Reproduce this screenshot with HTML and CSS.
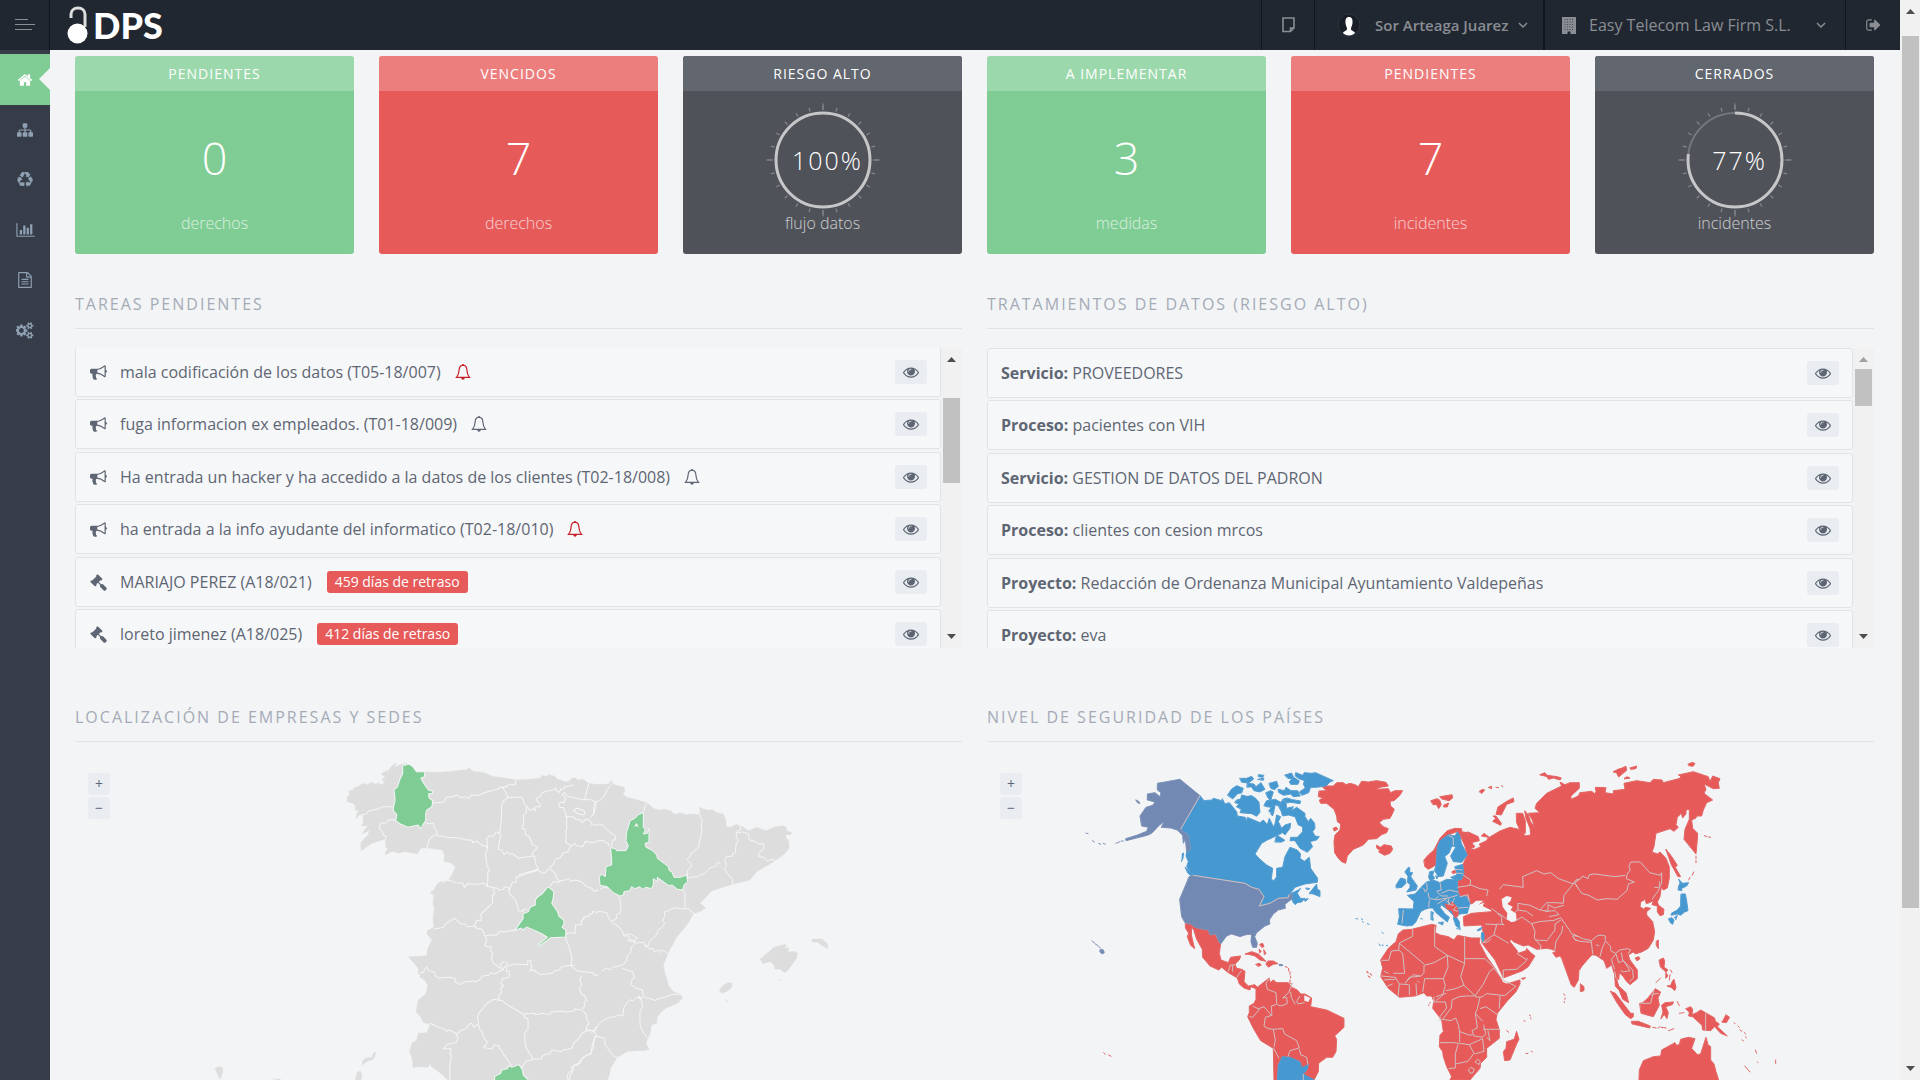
FILE: index.html
```html
<!DOCTYPE html>
<html lang="es">
<head>
<meta charset="utf-8">
<title>DPS</title>
<meta name="viewport" content="width=device-width, initial-scale=1">
<link rel="stylesheet" href="styles.css">
</head>
<body>
<svg class="sprite" aria-hidden="true">
  <symbol id="i-eye" viewBox="0 0 1792 1792"><path d="M1664 960q-152-236-381-353 61 104 61 225 0 185-131.5 316.5t-316.5 131.5-316.5-131.5-131.5-316.5q0-121 61-225-229 117-381 353 133 205 333.5 326.5t434.5 121.5 434.5-121.5 333.5-326.5zm-720-384q0-20-14-34t-34-14q-125 0-214.5 89.5t-89.5 214.5q0 20 14 34t34 14 34-14 14-34q0-86 61-147t147-61q20 0 34-14t14-34zm848 384q0 34-20 69-140 230-376.5 368.5t-499.5 138.5-499.5-139-376.5-368q-20-35-20-69t20-69q140-229 376.5-368t499.5-139 499.5 139 376.5 368q20 35 20 69z"/></symbol>
  <symbol id="i-horn" viewBox="0 0 1792 1792"><path d="M1664 640q53 0 90.5 37.5t37.5 90.5-37.5 90.5-90.5 37.5v384q0 52-38 90t-90 38q-417-347-812-380-58 19-91 66t-31 100.5 40 92.5q-20 33-23 65.5t6 58 33.5 55 48 50 61.5 50.5q-29 58-111.5 83t-168.5 11.5-132-55.5q-7-23-29.5-87.5t-32-94.5-23-89-15-101 3.5-98.5 22-110.5h-122q-66 0-113-47t-47-113v-192q0-66 47-113t113-47h480q435 0 896-384 52 0 90 38t38 90v384zm-128 604v-954q-394 302-768 343v270q377 42 768 341z"/></symbol>
  <symbol id="i-gavel" viewBox="0 0 1792 1792"><path d="M1771 1536q0 53-37 90l-107 108q-39 37-91 37-53 0-90-37l-363-364q-38-36-38-90 0-53 43-96l-256-256-126 126q-14 14-34 14t-34-14q2 2 12.5 12t12.5 13 10 11.5 10 13.5 6 13.5 5.5 16.5 1.5 18q0 38-28 68-3 3-16.5 18t-19 20.5-18.5 16.5-22 15.5-22 9-26 4.5q-40 0-68-28l-408-408q-28-28-28-68 0-13 4.5-26t9-22 15.5-22 16.5-18.5 20.5-19 18-16.5q30-28 68-28 10 0 18 1.5t16.5 5.5 13.5 6 13.5 10 11.5 10 13 12.5 12 12.5q-14-14-14-34t14-34l348-348q14-14 34-14t34 14q-2-2-12.5-12t-12.5-13-10-11.5-10-13.5-6-13.5-5.5-16.5-1.5-18q0-38 28-68 3-3 16.5-18t19-20.5 18.5-16.5 22-15.5 22-9 26-4.5q40 0 68 28l408 408q28 28 28 68 0 13-4.5 26t-9 22-15.5 22-16.5 18.5-20.5 19-18 16.5q-30 28-68 28-10 0-18-1.5t-16.5-5.5-13.5-6-13.5-10-11.5-10-13-12.5-12-12.5q14 14 14 34t-14 34l-126 126 256 256q43-43 96-43 52 0 91 37l363 363q37 39 37 91z"/></symbol>
  <symbol id="i-bell" viewBox="0 0 16 16"><path d="M8 1.2C5 1.4 4.2 3.600 4.100 6 4 9 3.400 11.200 1.500 13.300h13C12.600 11.200 12 9 11.900 6 11.800 3.600 11 1.400 8 1.200z" fill="none" stroke="currentColor" stroke-width="1.200"/><path d="M7.300 0h1.400v1.500H7.300zM6.200 13.500h3.600c-.1 1.500-.8 2.200-1.800 2.200s-1.700-.7-1.800-2.200z"/></symbol>
  <symbol id="i-chev" viewBox="0 0 10 6"><path d="M1 1l4 4 4-4" fill="none" stroke="currentColor" stroke-width="1.500"/></symbol>
  <symbol id="i-up" viewBox="0 0 9 5"><path d="M0 5L4.500 0 9 5z"/></symbol>
  <symbol id="i-down" viewBox="0 0 9 5"><path d="M0 0l4.500 5L9 0z"/></symbol>
  <symbol id="ticks" viewBox="0 0 116 116"><g fill="none" stroke="#83868b" stroke-width="4"><circle cx="58" cy="58" r="52" pathLength="24" stroke-dasharray=".09 .91" stroke-dashoffset=".045"/><circle cx="58" cy="58" r="53.500" stroke-width="6" pathLength="4" stroke-dasharray=".015 .985" stroke-dashoffset=".0075"/><circle cx="58" cy="58" r="47" stroke-width="2" stroke="#74777c"/></g></symbol>
</svg>

<div class="app">
  <header class="topbar">
    <button class="menu-toggle" aria-label="Menú">
      <svg width="20" height="12" viewBox="0 0 20 12"><path d="M0 .5h13M0 5.500h20M0 10.500h17" stroke="#8a8d93" stroke-width="1"/></svg>
    </button>
    <a class="logo" href="#">
      <svg width="22" height="38" viewBox="0 0 22 38"><path d="M4 12V8.500C4 4.500 6.800 2 11 2s7 2.500 7 6.500V21" fill="none" stroke="#dcdddd" stroke-width="3"/><circle cx="10.500" cy="27.500" r="10" fill="#fff"/></svg>
      <span>DPS</span>
    </a>
    <nav class="top-actions" aria-label="Cuenta">
      <button class="top-item top-note" aria-label="Notas"><svg width="13" height="16" viewBox="0 0 13 16"><path d="M1 1h11v10l-3.500 3.500H1zM12 11H8.500v3.500" fill="none" stroke="currentColor" stroke-width="1.600"/></svg></button>
      <button class="top-item top-user">
        <svg class="avatar" width="24" height="24" viewBox="0 0 24 24"><circle cx="12" cy="12" r="11" fill="#191d25" stroke="#303743"/><path d="M12 4c-3 0-3.800 2.500-3.500 6 .2 2.500 1.500 4 1.500 6 0 2-3.500 2-4 4 1.500 1.500 3.500 2.500 6 2.500s4.500-1 6-2.500c-.5-2-4-2-4-4 0-2 1.300-3.500 1.500-6 .3-3.500-.5-6-3.500-6z" fill="#fff"/></svg>
        <span>Sor Arteaga Juarez</span>
        <svg class="chev" width="10" height="6"><use href="#i-chev"/></svg>
      </button>
      <button class="top-item top-company">
        <svg width="14" height="17" viewBox="0 0 14 17"><path d="M0 0h14v17H8.500v-2.500h-3V17H0z" fill="currentColor"/><path d="M2.500 2.500h9M2.500 5h9M2.500 7.500h9M2.500 10h9M2.500 12.500h9" stroke="#3f444d" stroke-dasharray="1 1.500"/></svg>
        <span>Easy Telecom Law Firm S.L.</span>
        <svg class="chev" width="10" height="6"><use href="#i-chev"/></svg>
      </button>
      <a class="top-item top-exit" href="#" aria-label="Salir"><svg width="16" height="16" viewBox="0 0 1664 1792"><path fill="currentColor" d="M704 1440q0 4 1 20t.5 26.500-3 23.500-10 19.500-20.500 6.500h-320q-119 0-203.500-84.500t-84.500-203.500v-704q0-119 84.500-203.500t203.500-84.500h320q13 0 22.500 9.500t9.500 22.500q0 4 1 20t.5 26.500-3 23.500-10 19.500-20.500 6.500h-320q-66 0-113 47t-47 113v704q0 66 47 113t113 47h312l11.500 1 11.500 3 8 5.500 7 9 2 13.500zm928-544q0 26-19 45l-544 544q-19 19-45 19t-45-19-19-45v-288h-448q-26 0-45-19t-19-45v-384q0-26 19-45t45-19h448v-288q0-26 19-45t45-19 45 19l544 544q19 19 19 45z"/></svg></a>
    </nav>
  </header>

  <div class="body">
    <nav class="sidebar" aria-label="Principal">
      <a class="side-item active" href="#" aria-label="Inicio"><svg width="16" height="16" viewBox="0 0 1792 1792"><path d="M1472 992v480q0 26-19 45t-45 19h-384v-384h-256v384h-384q-26 0-45-19t-19-45v-480q0-1 .5-3t.5-3l575-474 575 474q1 2 1 6zm223-69l-62 74q-8 9-21 11h-3q-13 0-21-7l-692-577-692 577q-12 8-24 7-13-2-21-11l-62-74q-8-10-7-23.500t11-21.500l719-599q32-26 76-26t76 26l244 204v-195q0-14 9-23t23-9h192q14 0 23 9t9 23v408l219 182q10 8 11 21.500t-7 23.500z"/></svg></a>
      <a class="side-item" href="#" aria-label="Organización"><svg width="16" height="16" viewBox="0 0 1792 1792"><path d="M1792 1248v320q0 40-28 68t-68 28h-320q-40 0-68-28t-28-68v-320q0-40 28-68t68-28h96v-192h-512v192h96q40 0 68 28t28 68v320q0 40-28 68t-68 28h-320q-40 0-68-28t-28-68v-320q0-40 28-68t68-28h96v-192h-512v192h96q40 0 68 28t28 68v320q0 40-28 68t-68 28h-320q-40 0-68-28t-28-68v-320q0-40 28-68t68-28h96v-192q0-52 38-90t90-38h512v-192h-96q-40 0-68-28t-28-68v-320q0-40 28-68t68-28h320q40 0 68 28t28 68v320q0 40-28 68t-68 28h-96v192h512q52 0 90 38t38 90v192h96q40 0 68 28t28 68z"/></svg></a>
      <a class="side-item" href="#" aria-label="Ciclo"><svg width="16" height="16" viewBox="0 0 1792 1792"><path d="M836 1169l-15 368-2 22-420-29q-36-3-67-31.500t-47-65.500q-11-27-14.500-55t4-65 12-55 21.500-64 19-53q78 12 509 28zm-387-586l180 379-147-92q-63 72-111.500 144.500t-72.500 125-39.500 94.500-18.500 63l-4 21-190-357q-17-26-18-56t6-47l8-18q35-63 114-188l-140-86zm1231 517l-188 359q-12 29-36.500 46.500t-43.500 20.500l-18 4q-71 7-219 12l8 164-230-367 211-362 7 173q170 16 283 5t170-33zm-785-924q-47 63-265 435l-317-187-19-12 225-356q20-31 60-45t80-10q24 2 48.500 12t42 21 41.500 33 36 34.500 36 39.500 32 35zm655 307l212 363q18 37 12.500 76t-27.500 74q-13 20-33 37t-38 28-48.500 22-47 16-51.500 14-46 12q-34-72-265-436l313-195zm-143-226l142-83-220 373-419-20 151-86q-34-89-75-166t-75.500-123.500-64.500-80-47-46.500l-17-13 405 1q31-3 58 10.500t39 28.500l11 15q39 61 112 190z"/></svg></a>
      <a class="side-item" href="#" aria-label="Informes"><svg width="19" height="16" viewBox="0 0 2048 1792"><path d="M640 896v512h-256v-512h256zm384-512v1024h-256v-1024h256zm1024 1152v128h-2048v-1536h128v1408h1920zm-640-896v768h-256v-768h256zm384-384v1152h-256v-1152h256z"/></svg></a>
      <a class="side-item" href="#" aria-label="Documentos"><svg width="16" height="16" viewBox="0 0 1792 1792"><path d="M1596 380q28 28 48 76t20 88v1152q0 40-28 68t-68 28h-1344q-40 0-68-28t-28-68v-1600q0-40 28-68t68-28h896q40 0 88 20t76 48zm-444-244v376h376q-10-29-22-41l-313-313q-12-12-41-22zm384 1528v-1024h-416q-40 0-68-28t-28-68v-416h-768v1536h1280zm-1024-864q0-14 9-23t23-9h704q14 0 23 9t9 23v64q0 14-9 23t-23 9h-704q-14 0-23-9t-9-23v-64zm736 224q14 0 23 9t9 23v64q0 14-9 23t-23 9h-704q-14 0-23-9t-9-23v-64q0-14 9-23t23-9h704zm0 256q14 0 23 9t9 23v64q0 14-9 23t-23 9h-704q-14 0-23-9t-9-23v-64q0-14 9-23t23-9h704z"/></svg></a>
      <a class="side-item" href="#" aria-label="Ajustes"><svg width="18" height="17" viewBox="0 0 1920 1792"><path d="M832 896q0-106-75-181t-181-75-181 75-75 181 75 181 181 75 181-75 75-181zm768 512q0-52-38-90t-90-38-90 38-38 90q0 53 37.500 90.500t90.500 37.500 90.500-37.500 37.500-90.500zm0-1024q0-52-38-90t-90-38-90 38-38 90q0 53 37.500 90.500t90.500 37.500 90.500-37.500 37.500-90.500zm-384 421v185q0 10-7 19.500t-16 10.500l-155 24q-11 35-32 76 34 48 90 115 7 11 7 20 0 12-7 19-23 30-82.500 89.500t-78.500 59.500q-11 0-21-7l-115-90q-37 19-77 31-11 108-23 155-7 24-30 24h-186q-11 0-20-7.500t-10-17.500l-23-153q-34-10-75-31l-118 89q-7 7-20 7-11 0-21-8-144-133-144-160 0-9 7-19 10-14 41-53t47-61q-23-44-35-82l-152-24q-10-1-17-9.500t-7-19.500v-185q0-10 7-19.500t16-10.500l155-24q11-35 32-76-34-48-90-115-7-11-7-20 0-12 7-20 22-30 82-89t79-59q11 0 21 7l115 90q34-18 77-32 11-108 23-154 7-24 30-24h186q11 0 20 7.500t10 17.500l23 153q34 10 75 31l118-89q8-7 20-7 11 0 21 8 144 133 144 160 0 8-7 19-12 16-42 54t-45 60q23 48 34 82l152 23q10 2 17 10.500t7 19.500zm640 533v140q0 16-149 31-12 27-30 52 51 113 51 138 0 4-4 7-122 71-124 71-8 0-46-47t-52-68q-20 2-30 2t-30-2q-14 21-52 68t-46 47q-2 0-124-71-4-3-4-7 0-25 51-138-18-25-30-52-149-15-149-31v-140q0-16 149-31 13-29 30-52-51-113-51-138 0-4 4-7 4-2 35-20t59-34 30-16q8 0 46 46.500t52 67.500q20-2 30-2t30 2q51-71 92-112l6-2q4 0 124 70 4 3 4 7 0 25-51 138 17 23 30 52 149 15 149 31zm0-1024v140q0 16-149 31-12 27-30 52 51 113 51 138 0 4-4 7-122 71-124 71-8 0-46-47t-52-68q-20 2-30 2t-30-2q-14 21-52 68t-46 47q-2 0-124-71-4-3-4-7 0-25 51-138-18-25-30-52-149-15-149-31v-140q0-16 149-31 13-29 30-52-51-113-51-138 0-4 4-7 4-2 35-20t59-34 30-16q8 0 46 46.500t52 67.500q20-2 30-2t30 2q51-71 92-112l6-2q4 0 124 70 4 3 4 7 0 25-51 138 17 23 30 52 149 15 149 31z"/></svg></a>
    </nav>

    <main class="content">
      <section class="cards" aria-label="Indicadores">
        <article class="card green"><h3>PENDIENTES</h3><p class="num">0</p><p class="unit">derechos</p></article>
        <article class="card red"><h3>VENCIDOS</h3><p class="num">7</p><p class="unit">derechos</p></article>
        <article class="card dark"><h3>RIESGO ALTO</h3>
          <div class="gauge"><svg width="116" height="116" viewBox="0 0 116 116"><use href="#ticks"/><circle class="arc" cx="58" cy="58" r="47" pathLength="100" stroke-dasharray="100 100"/></svg><span>100%</span></div>
          <p class="unit">flujo datos</p></article>
        <article class="card green"><h3>A IMPLEMENTAR</h3><p class="num">3</p><p class="unit">medidas</p></article>
        <article class="card red"><h3>PENDIENTES</h3><p class="num">7</p><p class="unit">incidentes</p></article>
        <article class="card dark"><h3>CERRADOS</h3>
          <div class="gauge"><svg width="116" height="116" viewBox="0 0 116 116"><use href="#ticks"/><circle class="arc" cx="58" cy="58" r="47" pathLength="100" stroke-dasharray="77 100"/></svg><span>77%</span></div>
          <p class="unit">incidentes</p></article>
      </section>

      <div class="panels">
        <section class="panel">
          <h2>TAREAS PENDIENTES</h2>
          <div class="scroller">
            <ul class="rows scrolled">
              <li><svg class="ico"><use href="#i-horn"/></svg><span>mala codificación de los datos (T05-18/007)</span><svg class="bell late"><use href="#i-bell"/></svg><button class="view" aria-label="Ver"><svg><use href="#i-eye"/></svg></button></li>
              <li><svg class="ico"><use href="#i-horn"/></svg><span>fuga informacion ex empleados. (T01-18/009)</span><svg class="bell"><use href="#i-bell"/></svg><button class="view" aria-label="Ver"><svg><use href="#i-eye"/></svg></button></li>
              <li><svg class="ico"><use href="#i-horn"/></svg><span>Ha entrada un hacker y ha accedido a la datos de los clientes (T02-18/008)</span><svg class="bell"><use href="#i-bell"/></svg><button class="view" aria-label="Ver"><svg><use href="#i-eye"/></svg></button></li>
              <li><svg class="ico"><use href="#i-horn"/></svg><span>ha entrada a la info ayudante del informatico (T02-18/010)</span><svg class="bell late"><use href="#i-bell"/></svg><button class="view" aria-label="Ver"><svg><use href="#i-eye"/></svg></button></li>
              <li><svg class="ico"><use href="#i-gavel"/></svg><span>MARIAJO PEREZ (A18/021)</span><em class="delay">459 días de retraso</em><button class="view" aria-label="Ver"><svg><use href="#i-eye"/></svg></button></li>
              <li><svg class="ico"><use href="#i-gavel"/></svg><span>loreto jimenez (A18/025)</span><em class="delay">412 días de retraso</em><button class="view" aria-label="Ver"><svg><use href="#i-eye"/></svg></button></li>
            </ul>
            <div class="bar bar-tasks" aria-hidden="true"><svg class="arrow"><use href="#i-up"/></svg><div class="track"><div class="thumb"></div></div><svg class="arrow down"><use href="#i-down"/></svg></div>
          </div>
        </section>

        <section class="panel">
          <h2>TRATAMIENTOS DE DATOS (RIESGO ALTO)</h2>
          <div class="scroller">
            <ul class="rows">
              <li><span><b>Servicio:</b> PROVEEDORES</span><button class="view" aria-label="Ver"><svg><use href="#i-eye"/></svg></button></li>
              <li><span><b>Proceso:</b> pacientes con VIH</span><button class="view" aria-label="Ver"><svg><use href="#i-eye"/></svg></button></li>
              <li><span><b>Servicio:</b> GESTION DE DATOS DEL PADRON</span><button class="view" aria-label="Ver"><svg><use href="#i-eye"/></svg></button></li>
              <li><span><b>Proceso:</b> clientes con cesion mrcos</span><button class="view" aria-label="Ver"><svg><use href="#i-eye"/></svg></button></li>
              <li><span><b>Proyecto:</b> Redacción de Ordenanza Municipal Ayuntamiento Valdepeñas</span><button class="view" aria-label="Ver"><svg><use href="#i-eye"/></svg></button></li>
              <li><span><b>Proyecto:</b> eva</span><button class="view" aria-label="Ver"><svg><use href="#i-eye"/></svg></button></li>
            </ul>
            <div class="bar bar-data" aria-hidden="true"><svg class="arrow off"><use href="#i-up"/></svg><div class="track"><div class="thumb"></div></div><svg class="arrow down"><use href="#i-down"/></svg></div>
          </div>
        </section>

        <section class="panel">
          <h2>LOCALIZACIÓN DE EMPRESAS Y SEDES</h2>
          <div class="map">
            <svg class="spain" viewBox="0 0 887 338" role="img" aria-label="Mapa de provincias de España">
              <g transform="translate(-15 -52) scale(.3444 .3333)">
                <path class="land" d="M833 320L842 314 838 304 856 298 850 295 868 288 880 280 890 284 908 276 915 284 922 278 935 285 942 275 934 268 945 262 932 252 950 240 948 250 960 232 975 218 972 232 990 222 998 220 1015 222 1035 245 1062 246 1100 247 1120 245 1140 244 1165 240 1180 240 1188 233 1196 242 1205 245 1228 247 1240 252 1260 260 1280 262 1325 270 1345 269 1380 266 1395 264 1400 256 1412 260 1418 254 1435 258 1444 268 1460 272 1468 276 1480 272 1486 264 1497 264 1505 270 1518 268 1535 280 1572 285V1172H1128L1105 1150 1078 1130 1074 1122 1068 1132 1040 1130 1025 1133 1023 1108 1015 1085 1022 1060 1036 1050 1040 1030 1065 1028 1075 1002 1055 998 1048 982 1034 965 1040 930 1062 912 1065 900 1068 885 1058 870 1045 862 1045 855 1040 850 1040 835 1012 800 1065 797 1068 775 1080 750 1065 732 1067 722 1085 712 1083 680 1087 655 1083 640 1085 615 1075 608 1085 600 1095 582 1105 575 1128 570 1138 555 1148 532 1135 518 1115 515 1116 495 1110 480 1075 475 1060 474 1048 475 1038 492 1020 488 1000 485 985 490 965 484 945 495 944 485 952 478 945 470 945 448 905 460 875 482 873 468 875 455 892 438 900 420 878 432 885 418 895 408 876 408 880 398 880 375 870 374 858 387 862 372 866 362 856 360 858 348 850 340 835 335z"/>
                <path class="land" d="M450 1135l14-5 8 3v14l-7 21-8-15zM877 1125l2-12 8-8 20-4 3-12 7-2-3 14-6 8-16 5zM855 1172l4-8 4-17 8-3 6 8-3 20zM618 1167h22v4z"/>
                <path class="site" d="M995 220L1000 226 1013 222 1025 230 1035 245 1060 245 1058 260 1048 265 1056 280 1070 300 1082 304 1082 310 1070 312 1072 325 1082 332 1080 350 1065 360 1062 370 1062 392 1055 402 1047 416 1040 405 1010 412 990 403 975 392 978 375 967 360 973 330 970 300 980 290 986 270 995 250z"/>
                <path class="site" d="M1417 590L1434 605 1432 625 1428 640 1436 652 1445 665 1448 678 1462 690 1464 700 1458 712 1469 720 1468 741 1425 743 1392 768 1390 763 1415 742 1400 732 1380 722 1355 711 1345 720 1338 714 1320 722 1345 685 1344 672 1360 665 1365 652 1380 645 1380 630 1388 620 1400 612z"/>
                <path class="site" d="M1262 1160L1280 1150 1282 1140 1300 1136 1302 1127 1312 1132 1333 1124 1343 1140 1345 1155 1362 1172H1262z"/>
                <path class="edge" d="M875 374L890 372 897 362 920 358 938 350 967 350M975 390l-20-1-6 9-19 2-3 15 8 8 4 12 8 4-2 10M1062 398l8 4 13-3 4 15 8 12-2 8-8 3-10 8-7 15-2 15M1082 340l10-2 22-2 9-15 14 0 15-6 12 8 12-3 10 6 8-10 20 0 25-10 30-8 12-7 8 2 7-5M1325 270l-4 14-18 0-10 8-8 0M1093 438l20 0 10 4 35 2 22 6 16 0 2 8 12-4 16 12 12 2 4 12M1285 293l8 12 8 18-16 12-3 15 0 30-2 22-3 25-12 0-6 12-10-2-10 8 3 30M1298 322l30 0 8-2 8 6 4 16 10 10 6 10 8-6 8 6 0-12 14 0 0-8-8-8-4-8 12-6 4-10 14-6 18-4 10-6 0 8 10 5 4-10 10 0 2-8 12 0 6-4 8 2M1355 352l-2 18-8 6 2 20-6 20 8 0 4 20 8 2 8 18 2 8 14 6 0 6-12 10-3 14M1272 430l8 4-4 18-4 26 10 2 8 14 8-8 6 6 12 0 14 12 48-6 4 26 8 14-12 3-28 8-18 6M1240 482l-5 12 3 16 2 18 8 12-6 8 0 28-2 16M1110 577l18-7 22 8 20 2 4 13 8-12 32 2 18-3 8 8 20 6 10 0 4 6 14-2 2-6 12 0 2 10 9-24 12-2 0-14 40-14 16-4 4-4 18 10 8-4 10-12 20 20-2 6 14 16-22 0-8 12M1422 532l10-8 6-16 14-4 8-14 14-4 8-16 4-2-18-10 2-16-2-16 4-10-2-16 2-18M1303 598l4 16 16 16 4 12 4 20 14 2 0-6 12 0M1258 595l4 16-6 6 0 22-14 14-8 8-14 14 4 6-2 12-12-2-8 18M1085 717l14-2 14-3 8-12 25-15 18 17 14 0 4 8 22-2 8 8 10 0 8 8 2 14 20-4 16 2 8-12 12 2 34-6M1235 738l4 14-6 14 6 4 14 0-4 14 8 4-4 14 4 16 23 18M1280 835l0-12 8-8 12 3-4 10-14 10M1300 828l20-6 38 2 0-12 10 0-2 8 4 12-6 10 10-2 10 6 10 8 34-4 10-8 10-2 10-10 24-4 14 0M1045 850l12-4 0-8 8-6 6 10 16 4 4 14 12 4 30-2 14 4 0 10 16 8 10-8 26-3 6 3 12-6 10-12 18-2 6-8 12 4 12-8 14-6M1298 830l-2 14 8 0 0 18-20 6-4 12 8 8-8 6 2 14-8 8 0 14M1272 930l12 2 14 12 46 28 34-2 2 4 22-4 20 4 4-8 32-2 12 2 24-4 0-6 20 4 10-12-2-12 8-4-8-16-8-4-6-16 6-12-4-12 4-14M1272 930l-12-2-20 12-24 30-4 12 4 22M1075 1000l24 12 16 4 6 8 10-4 22 12 14-12 12-4 10-14 6-2 8 12 6-8 8 4M1150 1032l6 12-6 14-24 4-12 14 22 0-4 14 4 4 0 10-4 16 0 50M1215 1005l4 14 6 6 4 16 12 16-10 16 22 4 8-12 14 2 0 8 8 6 4 12 4 4 10 16 10 14M1345 972l4 10 10 6 0 30-10 10 2 38 6 14 18 28-22 6-14 22M1375 1108l22-2 6-10 8-4 10 0 8-12 12 2 12 4 8-6 14-2 12-4 4-14 20-20 6-12 12-4 0-14 8-10-8-14 0-10-10-14M1530 1020l24 2 6-12 12-2M1480 1172l0-14 8-12-2-16 18-4 2-10 22-20 14-4 4-30 6-12 0-10 14-2M1468 742l2 10 8 18 8 30-2 28 20 16 22 2 22 2 4 8 20-3M1450 572l18-2 10-4 4 8 14-4 20 6 10 12 20 8 4 8 22-5M1469 732l14-4 12 2 2-26 18 0-2-12 8-4 0-8 14 0 2-6 8-2 2-8 12 4 13-10M1536 280l-6 20-4 20-4 10-26-6-24-6-6-10-8 6 10 10-4 14-10-2-6 6 4 10 12 2 0 8 6 10-2 8 22 0M1525 328l20 2 12 8-4 20-4 18M1490 380l8 8 14 2 4 8 10-10 10 2 8 8 0 6 28 2M1490 360l12-5 14 4 8 6-2 10-12-2-10-4zM1484 468l10-8 4 6 20 4 8-16 20 4 24-8"/>
              </g>
              <g transform="translate(445 -2) scale(.3333)">
                <path class="land" d="M236 133L265 132 275 122 280 133 298 138 312 140 315 155 308 163 320 172 345 178 382 188 400 205 415 210 435 208 452 212 465 224 480 218 500 224 520 222 540 224 538 202 560 210 580 210 590 218 610 222 618 240 618 258 632 262 650 252 668 260 685 272 710 262 738 272 765 260 790 257 800 262 800 272 816 278 812 284 798 284 798 294 806 300 808 325 790 345 765 362 745 375 710 395 690 420 640 432 600 445 575 453 552 478 540 490 557 503 545 512 520 522 505 550 470 592 455 620 445 638 430 675 434 695 440 715 445 735 460 755 480 762 488 773 475 788 460 795 440 803 425 815 412 830 410 850 395 855 390 880 378 910 388 928 375 932 350 932 320 935 290 955 272 985 268 1005 262 1022H236zM720 658L745 637 762 622 795 613 800 615 793 626 806 622 805 636 822 634 833 640 830 655 818 672 800 695 792 698 782 688 765 688 762 675 752 665 738 668 730 672zM875 598L905 596 923 612 923 626 908 618 893 607 877 606zM598 752L605 740 620 729 637 728 635 742 620 755 605 760zM616 779l6 3-2 5zM780 717l4 4-4 1z"/>
                <path class="site" d="M370 218L370 262 376 270 370 282 382 280 387 265 387 307 375 310 378 322 395 330 410 345 412 355 445 380 448 392 456 396 462 412 480 412 500 405 503 425 492 435 488 450 472 448 458 436 445 436 412 412 412 424 400 416 400 435 394 446 378 442 368 448 360 440 345 446 334 440 330 452 312 455 310 466 300 468 280 458 262 440 240 436 238 412 244 402 256 410 258 380 275 375 275 360 272 323 285 326 290 332 318 332 325 318 318 302 320 275 325 262 330 242 345 235 355 224z"/>
                <path class="hole" d="M338 262l6-4 4-8 4 2 3 10-8-4z"/>
                <path class="edge" d="M382 188l-8 12-2 12-6 8M275 130l-12 18-12 22-12 12-14 4-4 14 0 20-10 14M236 252l14 4 16 18 20 14 0 12-8 0-4 20M236 302l16 0 4 8 8-2 4 12M240 448l12-6 12 2M295 470l6 12 2 18-2 18-12 6 0 12-14 8M235 514l15 2 12 4 4 16 14 14 18 12 10 14 4 12 14 0 4 12 12 2 2 12-10 8-2 16-10 10-2 12-10 14-22 6-10 2-6 8-14-6-12 10M312 588l6-6 16 2 8 4 10 6-10 8-12 2-8-6M305 684l14 6 20 6 4 18-8 6-2 14 14 10 20 6 2 14 8 10 14 2 14 6 8-6 20-4 20-8 28-2M370 772l-12 2-2-8 8 14 4 20-8 14 0 20 0 20 8 20 14 20M365 778l-14-6-10 10-12-2-8 8-10 16-2 24-12-4-14 8-8-2-20 8-16 12-12 14-12 14M340 605l14 4 18-2 4 14 10-4 2-14 12-8 12-14 2-12 12-6 8-14-6-6 6-14 0-14 4 0 14-6 10-6 26 4 16-2 16 14 18 12M378 612l8 14 14 0 4 10 10-6 4 8 8-8 18 10M488 450l8 10-2 14 2 22-6 6M540 224l2 8 4 4-2 20 2 14-4 20-6 30-14 14-8 6-4 10-10 8 12 12 2 8-12 14 0 24 8-4 26-2 4-6 12-2 6-6 12-12 20-6 0-8 12-2M612 384l6 10 6 10 12 10 2 18M618 383l0-14-4-8 6-12 18 0 0-8 8-2 2-24 6-14-6-14 2-12 14-8-6-12-8-4M652 278l16-2 18 6 0 10 4 10 16 2 10 8 14 0 2 14-14 12-2 12 16 2 10 12 12-6 12 4M196 866l8 6 16 0 12 18 22 4 2 22 16 20 10 14 12 2M230 888l-8 8-2 30-8 14-24 12-6 18-20 4-2 16-14 8-4 8 2 14"/>
              </g>
            </svg>
            <div class="zoom"><button aria-label="Acercar">+</button><button aria-label="Alejar">−</button></div>
          </div>
        </section>

        <section class="panel">
          <h2>NIVEL DE SEGURIDAD DE LOS PAÍSES</h2>
          <div class="map">
            <svg class="world" viewBox="0 0 887 338" role="img" aria-label="Mapa mundial por nivel de seguridad">
              <g transform="translate(73 8) scale(.3333)">
                <path class="c-high" d="M778 123L800 122 788 112 792 108 820 108 830 98 850 98 858 104 870 100 885 104 895 110 905 94 925 96 950 92 978 97 985 108 960 112 950 118 985 116 992 128 1005 122 1028 122 1018 138 1002 152 990 154 992 168 1003 178 998 190 990 205 970 208 958 218 970 230 985 236 980 248 965 254 950 266 925 268 910 285 880 298 862 318 857 340 845 335 835 325 824 308 822 275 825 255 840 240 842 222 832 215 830 198 822 178 800 160 782 160 778 150 790 144 776 140zM820 235l8-4 6 6-10 6zM950 286l12 6 10-8 22 4 4 10-8 12-16 6-18-10 4-6-8-4zM377 520L395 523 405 532 430 538 445 540 450 555 465 552 475 572 482 582 478 610 483 630 505 638 512 622 542 618 538 630 525 642 530 655 545 658 555 664 552 695 565 708 585 704 592 712 628 684 630 698 640 690 650 698 685 698 695 712 712 720 722 732 735 732 755 744 752 770 800 780 852 805 852 832 824 858 830 868 828 905 818 922 800 922 776 940 775 965 762 990H642L640 895 602 872 580 835 563 800 568 788 568 768 582 760 588 748 588 716 572 710 570 720 552 714 538 702 532 684 505 668 485 652 476 660 450 648 428 622 427 598 410 568 402 542 395 530 394 555 404 596 392 586 382 560 386 550 377 535zM556 612L575 605 595 612 612 628 618 634 600 630 585 618 570 614zM588 643l10-3 6 5-8 4zM618 642l6-9 16 0 14 8-14 2-14 8zM600 583l8-3 4 10-6 2zM598 598l6 6-4 4zM612 600l6 10-4 4zM676 650l6 2M686 655v8M690 665v8M692 678v6M690 690v5M688 698l8 4M131 908l5 5M146 915l7 4M921 664l4 4M932 671l2 4M926 678l4 4"/>
                <path class="c-low" d="M362 238L420 137 432 152 455 150 460 145 485 152 487 146 495 162 508 158 530 185 532 198 556 202 560 214 562 202 600 218 610 210 622 224 628 205 640 230 645 222 650 195 662 200 655 215 665 235 675 225 692 220 690 235 675 255 668 248 640 262 622 270 605 280 585 312 600 328 620 345 638 355 634 388 642 392 650 380 650 355 668 352 675 320 690 292 712 300 722 312 720 325 733 334 748 322 752 355 773 385 772 397 735 402 705 412 690 432 715 420 722 415 712 430 722 446 735 445 725 456 712 458 706 464 700 458 694 445 685 443 655 445 630 460 598 468 612 440 595 418 575 412 555 400 400 376 390 365 380 350 385 335 378 318 380 305 392 298 385 255zM655 165L668 150 678 160 680 175 700 170 695 182 710 172 735 190 735 200 745 215 752 205 764 220 765 235 758 245 765 258 778 260 770 270 750 275 758 290 742 307 720 295 705 272 690 272 692 262 712 262 728 245 728 230 715 225 705 200 685 195 668 198 664 185zM645 275l5-20 25 16-10 5zM530 150l12-3 3-12 15 4 15-2 12 8 10 12 3 30-10 12-15-8-35-3 4-10-15-8 8-8-12-4zM503 135l12-18 15-10 20 8-5 14-12 2-14 15zM540 85l20 0 15-6 6 8-15 12-20-2zM562 100l20 2 6 8 15-12 12 20-15 8-18-4-8-12-12 2zM596 74l16 2-4 6-12-2zM594 88l18-4-2 6zM708 68l20 8 5-8 22 2 12-2 53 24-10 4-12 12-28 4-18 0-6 16-20 8-8-10 18-12-6-12 4-10-18-6-10-8zM675 75l20-6 5 12 18 12-4 10-22 0-4-8 8-8-12-2zM628 100l22-6 5 15-12 10-10-4zM655 118l18 4 5-10 15 10 20 0 8 16-22 2-6-8-22 4-14-8zM668 148l12-4 18 5 24 4-2 8-28-4-12 2zM618 128l14-6 8 4-8 26-8-8zM612 166l8-14 26-4 18 10-6 10-12-4-6 26-14-6 8-12-14-2zM632 190l10-5-4 12zM748 430L770 402 772 418 780 422 780 440 760 432zM738 414l12 2-8 3zM733 448l12-2-8 8zM376 352l22 20-4 6-10-8zM366 312l5-3-2 16-5 10M888 506l5 1M904 506l4 3M907 514l3 3M922 521l5 2M966 547l4 3M957 582l4 5M966 585l4 1M979 587l4-1"/>
                <path class="c-mid" d="M388 380L400 376 555 400 575 412 597 418 612 440 598 468 630 460 655 445 685 443 688 433 697 432 697 446 675 463 676 475 655 480 640 492 628 510 630 522 615 528 590 548 584 560 592 580 590 592 578 592 573 575 575 553 558 554 540 560 515 552 500 558 482 582 475 572 468 552 450 555 445 540 430 538 405 532 395 523 375 518 365 500 359 448 375 410zM420 137L360 88 292 100 292 120 303 128 300 140 285 128 262 132 262 150 285 156 278 166 258 172 240 198 245 228 265 232 260 244 230 256 197 266 198 272 262 256 275 250 298 226 312 215 304 232 332 234 352 240 368 256 370 280 376 268 380 305 392 298 385 255 362 238zM228 150l8 4 4 6-6-1zM78 249l6 2M97 272l6 4M116 280l6 3M130 280l6 3M168 280l12-5M184 273l6 0M96 573l8 6M106 582l8 5M116 590l5 3M122 598l8 2 3 8-7 4-6-6zM658 643l10 1v3h-9z"/>
                <path class="gap" d="M733 736l18 8-6 12-12-4z"/>
                <path class="c-low" d="M652 990L655 945 667 920 690 922 720 935 725 953 742 946 745 942 742 958 730 972 762 990z"/>
                <path class="line" d="M362 238L420 137M400 376l155 24 20 12 22 6 15 22-14 28 32-8 25-15 30-2 3-10M628 685l-10 15 4 18 26 10 2 34 10 6 14-4 8-4-2-18-12 2 18-16 12-30M648 764l-14 4 2 28-20 6-4 26 12 8 16 2 6 32-4 22M692 725l2 18 12 20M720 738l-10 16 4 8 20-4M568 800l10 2 20-24-20-10M596 776l16-6 22 26M640 838l28-2 6 16 36 20 8 22-28 8-6 18M641 895l16 30M718 898l4 16 18 8 4 22M730 972v18M505 665l6-20 15 0M518 645v20M530 682l15-20"/>
              </g>
              <g transform="translate(373 8) scale(.3333)">
                <path class="c-high" d="M130 540L155 538 215 523 228 526 226 548 240 555 265 560 282 570 292 556 335 564 360 564 358 578 380 620 405 655 420 680 428 697 440 702 480 690 480 702 468 725 440 755 412 790 408 808 418 840 418 865 380 895 380 922 362 940 360 955 330 990H270L275 980 260 950 250 920 248 905 238 890 240 855 250 845 245 810 218 775 222 750 214 738 200 738 192 728 165 738 118 742 85 715 72 695 62 680 68 655 62 630 85 595 108 575 115 552zM470 845L477 868 470 882 450 930 434 932 430 905 438 895 440 875 462 868zM485 685l12-2-6 5z"/>
                <path class="c-high" d="M300 252L325 246 355 260 358 272 335 278 345 290 330 298 345 298 362 290 358 282 380 272 385 262 364 258 372 250 388 262 420 243 450 232 485 240 495 258 512 255 510 235 498 205 494 182 505 195 512 215 522 230 518 212 505 190 540 188 525 175 530 160 560 130 605 108 600 96 615 104 630 98 658 98 658 115 633 138 633 148 664 134V652L657 662 655 690 643 712 634 705 605 625 600 618 588 622 578 608 590 605 575 598 560 595 530 598 505 585 490 588 460 575 452 566 450 575 470 600 475 610 498 602 500 595 512 608 525 618 505 650 488 662 430 684 425 672 405 630 365 578 370 550 365 525 312 528 310 500 335 490 395 485 395 480 370 468 375 455 358 462 345 458 332 462 325 440 300 440 292 415 293 395 312 370 308 345 322 315 315 290zM192 330L205 315 222 300 240 265 262 242 285 235 305 236 305 245 330 250 300 262 290 245 265 255 240 275 228 345 205 358 195 350z"/>
                <path class="c-high" d="M213 152l18-6 8 4 5 14-8 12-6-12-10 0zM240 140l36-6 2 10-10 8-20-4zM252 165l14-6-4 12-10 0zM460 145l2 10-22 8-16 32-16-2 6-22 28-18zM400 198l8 0 16 22-2 6-24-12 8-8zM470 190l18 0 8 22 0 38-14-4-12-28zM540 74l14-6 8 8 30 4 12 4-4 6-20-6-14 4-6-8zM760 65l16-8 8-2 14-6 2 12-24 20-6-12zM810 54l20-6-2 8-14 2zM358 124l10-6 6 2-8 10zM386 112l9-3 0 6zM408 112l8 1M425 106l3 5M794 84l14 1M662 702l10 8 0 12-10 3zM612 732l2 4M615 744v4M613 755v3M508 795l4 3M511 804l3 2M492 813h3M440 842l6 5M498 911l6-1M514 904l3 2M20 666l4 3M31 672l3 3M25 678l3 4M219 745v4M210 757v3M206 765v2"/>
                <path class="c-low" d="M228 345L232 290 240 272 265 254 285 258 292 245 300 258 304 280 322 315 305 337 280 335 272 318 288 290 275 288 268 308 254 320 262 340 250 378 235 380 224 362zM285 350L308 343 312 370 305 388 290 392 272 382 290 375 288 362zM210 365l12-2-4 12 6 10-12 8-6-10zM228 378l6 2-3 6zM135 365l10-13 5 2-2 12 10 2-6 12 20 28-4 12-28 6 10-14 0-8-8-8 2-16zM108 406l14-22 14 4 2 12-12 12-16 2zM143 436L165 432 190 405 200 396 220 390 240 398 260 388 292 390 294 430 300 440 320 440 330 460 322 490 300 492 288 500 298 515 300 536 288 528 280 505 282 498 262 478 243 464 240 472 255 492 268 502 262 516 252 508 228 488 218 474 208 474 195 478 182 485 168 515 158 526 140 528 113 523 118 500 116 476 160 477 162 455zM236 518l14-2-2 8zM214 485l6 2-2 12 2 12-6-2zM182 506l5 1M290 536l12 2M352 540l14-8-4 8-8 2z"/>
                <path class="c-high" d="M256 462L268 466 276 455 290 470 296 488 292 500 284 502 276 482 262 478zM276 365l8-4 4 6-8 4z"/>
                <path class="c-low" d="M366 548l5-1 2 16-4 14-5-14z"/>
                <path class="gap" d="M425 447L440 438 455 442 452 452 442 462 458 470 452 480 468 490 470 512 455 517 440 508 442 490 428 470zM338 462l10-10 22 0-14 12 12 6-30 2zM878 310l8-60 22-8v72z"/>
                <path class="line" d="M158 537l0 22-40 20-2 22-22 2-8 28-22 0M116 600l12 10 6 60-34 0M118 580l74 62M192 646l0 22-8 10-36 4-12 18M192 646l30-8 40-22-38-26 0-60M262 616l52 24 0-80M315 626h60M262 616l2 36-14 34-56 0-6 40M314 640l-12 40 10 26-26 10-28 6M250 686l6 20-8 30-20 16M312 706l34 32-28 0-20 2-22 10-2 24-26 34M375 626l28 28-14 10-20 40-24 34M402 655l28 36 38 18-34 28-54-6-14 10-20 0M420 738l-2 38M360 742l-8 34-6 14 22 24M360 776l18-6 34 24M245 808l28 4 14-8 8 20 4 22 0 30M346 790l6 44-16 8 6 16 26 4 10-12-6-16 0-10M370 838l48 0M240 878l40 0 48 6M300 845l26 10 12 0M294 884l-8 28 0 42-20 2M328 884l14 26-18 24-38 8M328 884l40-18 4 38-28 8M380 862l10 10-6-30M218 756h38l4 18-20 26M62 678l44 4 12 20-4 38M72 690l26-2M82 708l16-6M98 690l10-4M118 702l28 2M148 704l0 32M168 700l2 36M178 698l-6-6M136 698l24-24 20 4M72 664l14 6M325 960l8-8 10 6-4 10-8 2zM345 936l8-8 8 6-4 10zM240 800v12M222 756v-16M228 740l30-10"/>
                <path class="line" d="M418 418l12-14 60 8-2-32 42-18 22 10 20-4 24 18 44 16-28 34-2 24-22-2-28 0-20 22-30-14-36-6 0 20-8 6M640 402l16-12 10 0M645 400l20 30M395 475l18 14 20 12 8 8M412 490l14 12-2 14 8 10M462 515l24-14 28 20 24-6 44-4 20-8 24 34 12 18 26 8M515 520l10 24-2 20 20 24-2 10M525 570l36 2 24-32 0-18 18-12M608 528l-2 18-18 28-4 28M638 558l8 12 18 4M540 480l24 4 0-20 20 10 28-8M555 484l30-2 12 12-30 6M475 480l24 4 20 14M368 578l34-24 8-30-34-2M402 554l34 20 10 6M410 522l22 2M368 578l14-2 10-8M430 684l0-24 40-2 28-24 4-10M470 610l28 18M292 412l38-6 2-16-24-16M330 404l30 12 24 4-4 18M300 440l24-6 4 20M200 398l2 20-10 8M240 398l4 22-14 4 14 14 20 0M244 430l24-10 26 6M202 425l-14-10M204 428l4 18 18 2 10-10M208 450l-2 22M226 450l38-6 28-8M232 462l30-18M266 445l0 20M284 444l-8 16M294 474l30-2M130 480l-4 40M252 445l20 20 10 0M290 468l-10 12 14 4M283 370l26 0M286 358l22 2M266 256l14 8 0 22"/>
              </g>
              <g transform="translate(593 8) scale(.3333)">
                <path class="c-high" d="M0 128L35 124 45 132 48 124 46 112 78 113 75 128 100 132 100 122 135 118 132 100 170 92 210 98 220 88 246 90 250 98 300 85 302 78 295 75 340 65 385 80 390 95 398 78 420 86 415 98 418 115 400 116 384 108 372 102 378 118 372 130 398 150 380 158 370 180 365 198 350 198 348 204 335 210 338 235 353 250 352 270 348 312 312 268 315 238 328 208 328 178 318 180 318 192 308 204 304 190 292 202 288 224 295 232 282 244 270 236 228 250 222 290 216 306 232 312 240 306 258 325 268 350 268 385 262 414 250 420 244 412 240 440 232 456 236 466 252 478 250 494 240 497 232 485 232 468 216 464 220 452 204 460 198 460 196 448 182 456 180 470 192 478 196 472 212 475 200 485 200 495 218 515 224 545 220 570 205 595 185 606 166 612 160 606 145 615 150 630 172 660 172 686 150 704 138 692 130 680 118 668 116 690 108 680 116 708 138 728 146 758 128 748 118 722 106 708 104 675 95 645 80 655 72 632 48 616 36 614 20 632 0 655z"/>
                <path class="c-high" d="M258 298l16 20 18 28-6 6 16 28-8 0-20-36zM325 42l12-5 8 4-6 8-12-2zM348 318v8M348 332v6M341 366l-4 10M330 382l-4 8M373 257l8 3M386 261l6 1M230 573l5-3 0 26-6-10zM166 624l10-4 4 6-8 6zM238 630l12-6 4 8-2 20 12 8-6 6-16-14zM262 708l10-2 6-14 4-4 6 24-4 10-8-8zM258 668l6 10-6 6zM272 660l4 8M270 674l-2 16M228 698l14-14M92 724l14 6 46 60 8 0 0 10-8 6-16-12-24-34zM180 760l8-2 16-14 22-28 16 10-8 18 4 22-18 34-16-4-20-6zM155 814l20 0 36 14-2 6-52-12zM218 832l10 2M234 834l6-4M244 832l14 2M266 842l16-6M243 806l6-20-4-20 10-8 26-2-4 8-20 6 8 18-4 18-8-12zM292 755l6 12M298 790l14-2M318 776l14-6 6 8-2 16 14-6 12-8 42 24 2 10 12 8-6 8 30 28-20-8-18-20-12 12-24-2-2-14-28-26-12-2 2-10zM425 816l14 2 10-16-12-8M462 818l4 4M474 828l4 4M480 840l6 4M494 848l2 4M496 860l4 4M486 870l4 2M526 900l4 10M532 936l2 2M494 948l16 18M587 930v10M133 86l8-6 8 4z"/>
                <path class="c-high" d="M177 990L178 960 190 932 220 920 242 918 245 900 285 878 290 886 298 884 302 868 325 862 345 866 335 895 352 914 362 912 378 862 384 884 392 890 392 930 402 942 408 965 416 990z"/>
                <path class="c-low" d="M296 388l12 12 18-2-6 10-16 8 2 6-12-2 2-12 4-8zM304 432l12 0 4 20 4 30-10 4-12 10-10-4-18 4 0-6 18-10 10-12 0-18zM266 506l10-3 6 8-4 12-6-4zM284 502l8-6-4 12z"/>
                <path class="seam" d="M-6 134H6V644H-6z"/>
                <path class="line" d="M-10 388l10 0 8-10 16 8 4-12 16-2 60 8 32-4M-20 400l8-10 10 0M-15 400l20 30 22 6 24 14 30-4 30 2 30-26 4-20 18-6-24-10 2-12 4-8 6-4-4-14 6-12 28 0 28 32 32 8 4-8 0 20 0 14-10 10-12 0M-22 558l8 12 14 4 34 3M216 448l18-24 6-14-2-16M-20 552l28 14 26 6 20-16 14 0 8 2 0 14 16 18 0 12 14 8 14-10 22-4 10 4-8 12M34 574l4 38M60 620l6-24 10-22M48 584l10 4M108 612l-14 16 10 30M108 612l8 26 14-6 20 30-20 4-8-4M124 608l4 22 30 30 2 24-12 12M104 664l4 20M182 760l30 0 10-40M214 734l22-4M377 790v52"/>
              </g>
            </svg>
            <div class="zoom"><button aria-label="Acercar">+</button><button aria-label="Alejar">−</button></div>
          </div>
        </section>
      </div>
    </main>
  </div>
</div>
<div class="bar bar-page" aria-hidden="true"><svg class="arrow"><use href="#i-up"/></svg><div class="track"><div class="thumb"></div></div><svg class="arrow down"><use href="#i-down"/></svg></div>
</body>
</html>
```
FILE: styles.css
```css
* { box-sizing: border-box; }

body {
  margin: 0;
  display: flex;
  height: 100vh;
  overflow: hidden;
  background: #f2f4f6;
  color: #5e6673;
  font: 16px/24px "Open Sans", "Noto Sans", sans-serif;
}

h2, h3, p, ul { margin: 0; padding: 0; font-weight: 400; }
ul { list-style: none; }
a { color: inherit; text-decoration: none; }
button { border: 0; padding: 0; background: none; color: inherit; font: inherit; cursor: pointer; }
svg { display: block; flex: none; fill: currentColor; }
.sprite { position: absolute; width: 0; height: 0; }

.app { flex: 1; min-width: 0; display: flex; flex-direction: column; }
.body { flex: 1; min-height: 0; display: flex; }

/* Top bar */
.topbar { display: flex; flex: none; height: 50px; background: #202731; color: #8a8d93; }
.menu-toggle { width: 50px; padding-left: 15px; border-right: 1px solid #12161c; }
.logo { display: flex; align-items: center; gap: 4px; padding-left: 17px; color: #fff; font: 900 36px/50px Lato, "Open Sans", sans-serif; }
.top-actions { display: flex; margin-left: auto; }
.top-item { display: flex; align-items: center; border-left: 1px solid #12161c; }
.top-note { width: 53px; justify-content: center; }
.top-user { width: 229px; padding-left: 22px; font-size: 15px; font-weight: 600; }
.top-user .avatar { margin-right: 14px; }
.top-company { width: 302px; padding: 0 19px 0 17px; border-left-width: 2px; }
.top-company span { margin-left: 13px; }
.top-user .chev { margin-left: 10px; }
.top-company .chev { margin-left: auto; }
.top-exit { width: 55px; justify-content: center; }

/* Side navigation */
.sidebar { flex: none; width: 50px; padding-top: 4px; background: #363d49; color: #8ea0b2; }
.side-item { display: flex; align-items: center; justify-content: center; height: 50px; }
.side-item.active { position: relative; height: 51px; background: #7fcd94; color: #fff; }
.side-item.active::after {
  content: "";
  position: absolute;
  right: 0;
  top: 14px;
  border: 11px solid transparent;
  border-left: 0;
  border-right-color: #f2f4f6;
}

/* Content */
.content { flex: 1; min-width: 0; padding: 6px 26px 0 25px; overflow: hidden; }
.cards { display: grid; grid-template-columns: repeat(6, 1fr); gap: 25px; }
.card { height: 198px; border-radius: 3px; overflow: hidden; color: #fff; text-align: center; }
.card h3 { height: 35px; background: rgba(255, 255, 255, .22); font-size: 14px; line-height: 35px; font-weight: 500; letter-spacing: 1px; }
.card.green { background: #7fcd94; }
.card.red { background: #e75a5a; }
.card.dark { background: #4f5259; }
.card.dark h3 { background: #62666e; }
.num { height: 120px; font-size: 45px; line-height: 134px; font-weight: 300; }
.unit { font-weight: 300; opacity: .7; }
.gauge { position: relative; display: flex; justify-content: center; height: 120px; padding-top: 11px; }
.gauge span { position: absolute; inset: 0; padding-left: 10px; font-size: 25px; line-height: 138px; font-weight: 300; letter-spacing: 2px; }
.gauge .arc { fill: none; stroke: #c6c7c9; stroke-width: 3; transform: rotate(-90deg); transform-origin: center; }

.panels { display: grid; grid-template-columns: repeat(2, minmax(0, 1fr)); column-gap: 25px; }
.panel h2 { margin-top: 38px; height: 37px; border-bottom: 1px solid #e0e3e8; font-size: 16px; line-height: 24px; letter-spacing: 2px; color: #a5abb6; }
.panel:nth-child(n + 3) h2 { margin-top: 57px; }

.scroller { display: flex; height: 300px; margin-top: 19px; overflow: hidden; }
.rows { flex: 1; min-width: 0; }
.rows.scrolled { margin-top: -1px; }
.rows li { display: flex; align-items: center; height: 50px; margin-bottom: 2px; padding: 0 13px; border: 1px solid #e0e3e8; border-radius: 3px; background: #f6f7f9; }
.rows li:nth-child(even) { margin-bottom: 3px; }
.rows span { padding-bottom: 1px; }
.ico { width: 17px; height: 17px; margin: 0 13px 0 1px; }
.bell { width: 16px; height: 16px; margin-left: 14px; }
.bell.late { color: #c81e26; }
.delay { margin-left: 15px; padding: 0 8px; border-radius: 3px; background: #e75a5a; color: #fff; font-size: 14px; line-height: 22px; font-style: normal; }
.view { display: flex; align-items: center; justify-content: center; width: 32px; height: 24px; margin-left: auto; border-radius: 3px; background: #e9ecf1; }
.view svg { width: 16px; height: 16px; }

/* Scroll bars */
.bar { flex: none; display: flex; flex-direction: column; align-items: center; width: 21px; background: #f1f1f1; color: #4d4d4d; }
.arrow { width: 9px; height: 5px; margin: 9px 0 7px; }
.arrow.down { margin: 7px 0 9px; }
.arrow.off { color: #a0a0a0; }
.track { flex: 1; }
.thumb { width: 17px; background: #c1c1c1; }
.bar-tasks .thumb { height: 85px; margin-top: 29px; }
.bar-data .thumb { height: 37px; }
.bar-page { width: 20px; }
.bar-page .track { padding-top: 15px; }
.bar-page .thumb { height: 872px; }

/* Maps */
.map { position: relative; }
.map > svg { width: 100%; height: auto; overflow: hidden; }
.zoom { position: absolute; left: 13px; top: 31px; display: grid; gap: 2px; }
.zoom button { width: 22px; height: 22px; border-radius: 3px; background: #e9ecf1; font-size: 14px; line-height: 22px; }
.land { fill: #ddd; stroke: #ddd; stroke-width: 1; }
.site { fill: #7fcd94; stroke: #f4f5f7; stroke-width: 3; }
.edge { fill: none; stroke: #f4f5f7; stroke-width: 3; stroke-linejoin: round; }
.hole, .gap { fill: #f2f4f6; }
.c-high, .c-low, .c-mid { stroke-width: 3; stroke-linejoin: round; stroke-linecap: round; }
.c-high { fill: #e75a5a; stroke: #e36664; }
.c-low { fill: #4698d0; stroke: #559ed1; }
.c-mid { fill: #7189b3; stroke: #7c91b7; }
.seam { fill: #e75a5a; }
.line { fill: none; stroke: #d0c0c2; stroke-width: 3; stroke-linejoin: round; }
```
